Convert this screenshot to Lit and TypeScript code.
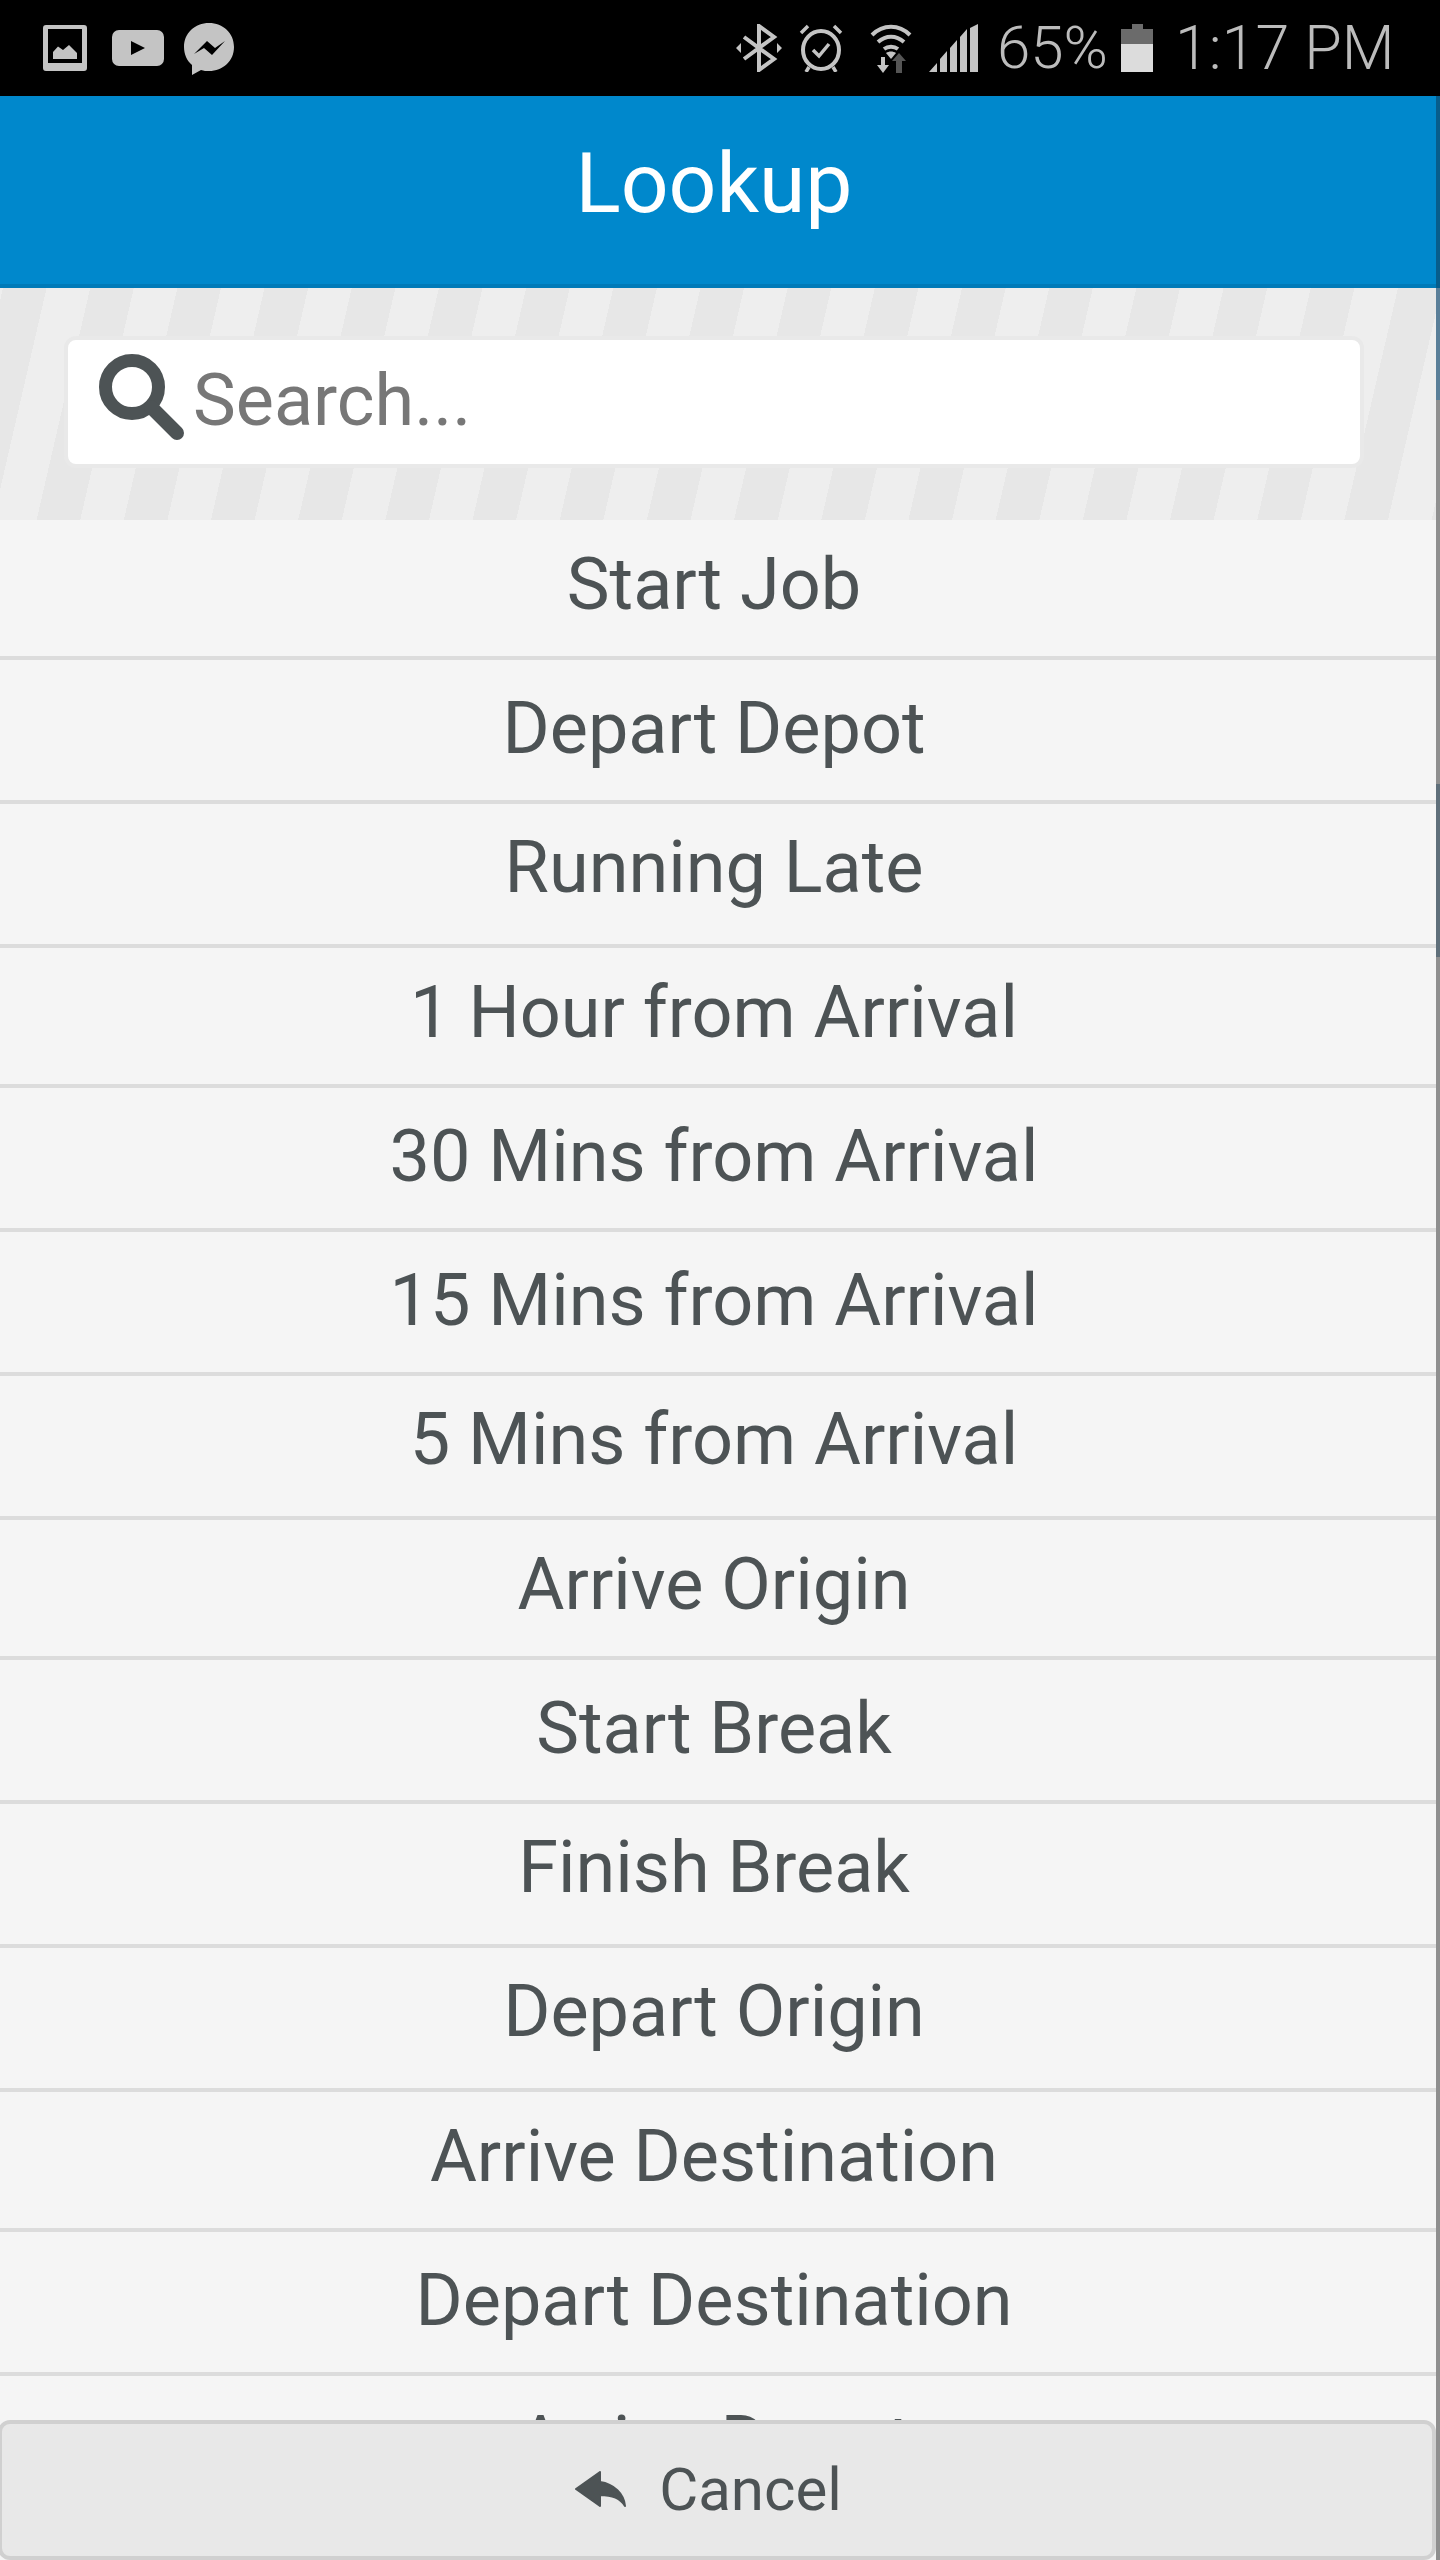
import { LitElement, html, css, svg } from "lit";
import { customElement } from "lit/decorators.js";

// label, row height class, text nudge class
const ROWS: [string, string][] = [
  ["Start Job", "short"],
  ["Depart Depot", "low"],
  ["Running Late", "high"],
  ["1 Hour from Arrival", "short"],
  ["30 Mins from Arrival", "low"],
  ["15 Mins from Arrival", "low"],
  ["5 Mins from Arrival", "high"],
  ["Arrive Origin", "short"],
  ["Start Break", "low"],
  ["Finish Break", "high"],
  ["Depart Origin", "high"],
  ["Arrive Destination", "short"],
  ["Depart Destination", "low"],
  ["Arrive Depot", ""],
];

const galleryIcon = svg`<svg class="gallery" viewBox="0 0 44 46" width="44" height="46">
  <path fill="#c4c4c4" fill-rule="evenodd" d="M3 0h38a3 3 0 0 1 3 3v40a3 3 0 0 1-3 3H3a3 3 0 0 1-3-3V3a3 3 0 0 1 3-3zM5 4v34h34V4z"/>
  <path fill="#c4c4c4" d="M10 27l5-5.500 5 3.500 6-5 8 8v6H10z"/>
</svg>`;

const youtubeIcon = svg`<svg class="youtube" viewBox="0 0 52 36" width="52" height="36">
  <path fill="#c4c4c4" fill-rule="evenodd" d="M7 0h38a7 7 0 0 1 7 7v22a7 7 0 0 1-7 7H7a7 7 0 0 1-7-7V7a7 7 0 0 1 7-7zM19 11v14l14-7z"/>
</svg>`;

const messengerIcon = svg`<svg class="messenger" viewBox="0 0 50 52" width="50" height="52">
  <path fill="#c4c4c4" d="M25 0C11 0 0 10 0 24c0 7 3 14 8 18v10l9-5c3 1 5 1 8 1 14 0 25-10 25-24S39 0 25 0z"/>
  <path fill="#000" d="M10 31l13-13 8 7 10-7-13 14-8-7z"/>
</svg>`;

const bluetoothIcon = svg`<svg class="bt" viewBox="0 0 46 48" width="46" height="48">
  <path fill="none" stroke="#c4c4c4" stroke-width="4" d="M8 13l30 22-15 11V2l15 11L8 35"/>
  <path fill="#c4c4c4" d="M0 24l5-5v10zM46 24l-5-5v10z"/>
</svg>`;

const alarmIcon = svg`<svg class="alarm" viewBox="0 0 44 48" width="44" height="48">
  <g fill="none" stroke="#c4c4c4">
    <ellipse cx="22" cy="26" rx="18" ry="19" stroke-width="4"/>
    <path stroke-width="3.500" d="M2 9l7-7M42 9l-7-7M10 43l-3 5M34 43l3 5"/>
    <path stroke-width="3.500" d="M14 26l6 6 10-12"/>
  </g>
</svg>`;

const wifiIcon = svg`<svg class="wifi" viewBox="0 0 42 50" width="42" height="50">
  <g fill="none" stroke="#c4c4c4" stroke-width="4">
    <path d="M2 12c11-11 27-11 38 0"/>
    <path d="M8 19c8-7 18-7 26 0"/>
    <path d="M14 26c4-3 10-3 14 0"/>
  </g>
  <path fill="#c4c4c4" d="M21 36l-5-6c3-2 7-2 10 0z"/>
  <path fill="#c4c4c4" d="M11 34h4v8h4l-6 8-6-8h4z"/>
  <path fill="#555" d="M26 50v-12h-4l7-8 7 8h-4v12z"/>
</svg>`;

const signalIcon = svg`<svg class="signal" viewBox="0 0 49 48" width="49" height="48">
  <path fill="#c4c4c4" d="M0 48l8-9v9zM11 48V35l7-8v21zM21 48V24l7-8v32zM31 48V13l7-8v43zM41 48V4l8-4v48z"/>
</svg>`;

const batteryIcon = svg`<svg class="battery" viewBox="0 0 32 48" width="32" height="48">
  <path fill="#6b6b6b" d="M11 0h11v5h10v15H0V5h11z"/>
  <rect fill="#dcdcdc" y="20" width="32" height="28"/>
</svg>`;

const searchIcon = svg`<svg class="lens" viewBox="0 0 86 86" width="86" height="86">
  <circle cx="33" cy="33" r="26.500" fill="none" stroke="currentColor" stroke-width="13"/>
  <path d="M52 53l26 26" stroke="currentColor" stroke-width="14" stroke-linecap="round"/>
</svg>`;

const replyIcon = svg`<svg class="reply" viewBox="0 0 52 36" width="52" height="36">
  <path fill="currentColor" stroke="currentColor" stroke-width="2" stroke-linejoin="round" d="M26 1v10c14 2 24 12 25 24-4-7-13-11-25-11v11L2 18z"/>
</svg>`;

@customElement("app-root")
export class AppRoot extends LitElement {
  static styles = css`
    :host {
      display: block;
      position: relative;
      width: 1440px;
      height: 2560px;
      overflow: hidden;
      background: #f5f5f5;
      font-family: Roboto, "Liberation Sans", sans-serif;
      color: #4d5355;
    }
    svg {
      display: block;
      flex: none;
    }
    .status {
      display: flex;
      align-items: flex-start;
      height: 96px;
      box-sizing: border-box;
      background: #000;
      color: #bcbcbc;
      padding: 24px 0 0 43px;
    }
    .gallery {
      margin-top: 1px;
    }
    .youtube {
      margin: 6px 0 0 25px;
    }
    .messenger {
      margin: -1px 0 0 20px;
    }
    .bt {
      margin-left: 502px;
    }
    .alarm {
      margin-left: 17px;
    }
    .wifi {
      margin: -1px 0 0 27px;
    }
    .signal {
      margin-left: 17px;
    }
    .pct {
      margin-left: 19px;
      width: 111px;
      font-size: 60px;
      font-weight: 300;
      line-height: 48px;
      white-space: nowrap;
    }
    .battery {
      margin-left: 13px;
    }
    .clock {
      margin-left: 22px;
      font-size: 61px;
      font-weight: 300;
      line-height: 48px;
      white-space: nowrap;
    }
    .header {
      height: 192px;
      box-sizing: border-box;
      background: #0088cc;
      border-bottom: 4px solid #007ab8;
      padding: 0 12px 14px 0;
      display: flex;
      align-items: center;
      justify-content: center;
      color: #fff;
      font-size: 84px;
    }
    .search {
      height: 232px;
      box-sizing: border-box;
      padding: 48px 76px 52px 64px;
      background: repeating-linear-gradient(
        103deg,
        #eeeeee 0 2.9px,
        #e7e7e7 2.9px 45.4px,
        #eeeeee 45.4px 84.95px
      );
    }
    .field {
      display: flex;
      align-items: center;
      height: 124px;
      background: #fff;
      border: 4px solid #e9e9e9;
      border-radius: 12px;
      padding-left: 31px;
      color: #777;
      font-size: 72px;
    }
    .field span {
      margin-bottom: 4px;
    }
    .lens {
      color: #4d5355;
      margin: 0 8px 10px 0;
    }
    .row {
      display: flex;
      align-items: center;
      justify-content: center;
      height: 144px;
      box-sizing: border-box;
      border-bottom: 4px solid #dcdcdc;
      padding: 0 12px 8px 0;
      font-size: 72px;
      white-space: nowrap;
    }
    .row.short {
      height: 140px;
    }
    .row.low {
      padding-bottom: 4px;
    }
    .row.high {
      padding-bottom: 13px;
    }
    .cancel {
      position: absolute;
      left: -2px;
      bottom: 0;
      width: 1438px;
      height: 140px;
      box-sizing: border-box;
      display: flex;
      align-items: center;
      justify-content: center;
      gap: 33px;
      background: #e8e8e8;
      border: 4px solid #d0d0d0;
      border-radius: 12px;
      font-size: 60px;
      padding: 0 18px 2px 0;
    }
    .rail {
      position: absolute;
      top: 0;
      right: 0;
      width: 4px;
      height: 2560px;
      background: linear-gradient(
        #000 0 96px,
        #075d8c 96px 288px,
        #5a7f99 288px 400px,
        #8f8f8f 400px 784px,
        #5f6f7a 784px 957px,
        #8f8f8f 957px
      );
    }
  `;

  render() {
    return html`
      <div class="status">
        ${galleryIcon}${youtubeIcon}${messengerIcon}${bluetoothIcon}${alarmIcon}${wifiIcon}${signalIcon}
        <span class="pct">65%</span>
        ${batteryIcon}
        <span class="clock">1:17 PM</span>
      </div>
      <div class="header">Lookup</div>
      <div class="search">
        <div class="field">${searchIcon}<span>Search...</span></div>
      </div>
      <div class="list">
        ${ROWS.map(
          ([label, kind]) => html`<div class="row ${kind}">${label}</div>`
        )}
      </div>
      <div class="cancel">${replyIcon}<span>Cancel</span></div>
      <div class="rail"></div>
    `;
  }
}
